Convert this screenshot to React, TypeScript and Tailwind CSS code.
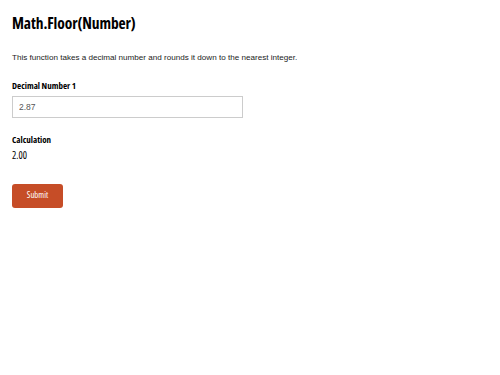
import React, { useState } from 'react';

export default function App() {
    const [value, setValue] = useState('2.87');
    const [result, setResult] = useState('2.00');

    const handleSubmit = (event: React.FormEvent<HTMLFormElement>) => {
        event.preventDefault();
        const n = parseFloat(value);
        setResult(isNaN(n) ? '' : Math.floor(n).toFixed(2));
    };

    return (
        <div className="px-3 pt-[13px] bg-white min-h-[375px] text-black">
            <h1 className="text-[15.5px] tracking-[-0.1px] font-bold leading-5 [font-family:'Open_Sans',sans-serif] [font-stretch:condensed]">Math.Floor(Number)</h1>
            <p className="mt-[19px] text-[8.1px] leading-3 [font-family:'Liberation_Sans',Arial,sans-serif] text-[#222]">
                This function takes a decimal number and rounds it down to the nearest integer.
            </p>
            <form onSubmit={handleSubmit}>
                <label className="block mt-[15px] text-[9px] leading-[14px] font-bold [font-family:'Open_Sans',sans-serif] [font-stretch:condensed]">Decimal Number 1</label>
                <input
                    type="text"
                    value={value}
                    onChange={(e) => setValue(e.target.value)}
                    className="mt-[3px] block w-[231px] h-[22px] border border-[#ccc] px-[6px] text-[8.5px] text-[#555] [font-family:'Liberation_Sans',Arial,sans-serif] focus:outline-none"
                />
                <label className="block mt-[15px] text-[9px] leading-[14px] font-bold [font-family:'Open_Sans',sans-serif] [font-stretch:condensed]">Calculation</label>
                <div className="mt-[1px] text-[10px] leading-[14px] [font-family:'Open_Sans',sans-serif] [font-stretch:semi-condensed]">{result}</div>
                <button type="submit" className="block mt-[22px] w-[51px] h-[24px] rounded-[3px] bg-[#c64d27] text-white text-[8.7px] [font-family:'Open_Sans',sans-serif] [font-stretch:condensed]">Submit</button>
            </form>
        </div>
    );
}
